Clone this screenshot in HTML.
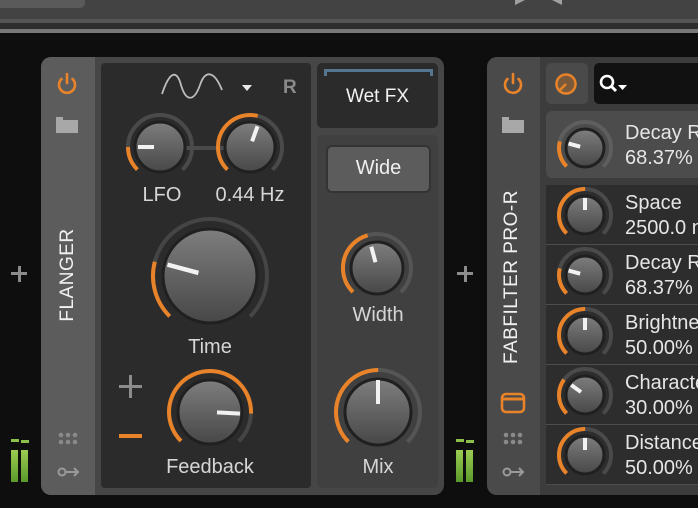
<!DOCTYPE html>
<html><head><meta charset="utf-8"><style>
*{margin:0;padding:0;box-sizing:border-box}
body{width:698px;height:508px;background:#0e0e0e;position:relative;overflow:hidden;font-family:"Liberation Sans","DejaVu Sans",sans-serif;color:#dedede}
.a{position:absolute}
.t{position:absolute;text-align:center;font-size:20px;color:#d6d6d6;white-space:nowrap}
.ff{position:absolute;left:625px;font-size:20px;line-height:25px;color:#e6e6e6;white-space:nowrap}
</style></head><body>
<div class="a" style="left:0;top:0;width:698px;height:19px;background:#434343"></div>
<div class="a" style="left:0;top:0;width:85px;height:8px;background:#5a5a5a;border-bottom-right-radius:5px"></div>
<div class="a" style="left:0;top:19px;width:698px;height:4px;background:#555"></div>
<div class="a" style="left:0;top:23px;width:698px;height:6px;background:#2e2e2e"></div>
<div class="a" style="left:0;top:29px;width:698px;height:4px;background:#777"></div>

<div class="a" style="left:11px;top:272px;width:16px;height:3px;background:#8c8c8c"></div>
<div class="a" style="left:18px;top:266px;width:3px;height:16px;background:#8c8c8c"></div>
<div class="a" style="left:457px;top:272px;width:16px;height:3px;background:#8c8c8c"></div>
<div class="a" style="left:464px;top:266px;width:3px;height:16px;background:#8c8c8c"></div>
<div class="a" style="left:11px;top:439px;width:8px;height:3px;background:#8cc04a"></div>
<div class="a" style="left:21px;top:440px;width:8px;height:3px;background:#8cc04a"></div>
<div class="a" style="left:11px;top:450px;width:7px;height:32px;background:linear-gradient(#9ccc52,#5a9a2a)"></div>
<div class="a" style="left:21px;top:450px;width:7px;height:32px;background:linear-gradient(#9ccc52,#5a9a2a)"></div>
<div class="a" style="left:456px;top:439px;width:8px;height:3px;background:#8cc04a"></div>
<div class="a" style="left:466px;top:440px;width:8px;height:3px;background:#8cc04a"></div>
<div class="a" style="left:456px;top:450px;width:7px;height:32px;background:linear-gradient(#9ccc52,#5a9a2a)"></div>
<div class="a" style="left:466px;top:450px;width:7px;height:32px;background:linear-gradient(#9ccc52,#5a9a2a)"></div>

<div class="a" style="left:41px;top:57px;width:403px;height:438px;background:#464646;border-radius:10px;overflow:hidden">
  <div class="a" style="left:0;top:0;width:54px;height:438px;background:#5c5c5c"></div>
</div>
<div class="a" style="left:101px;top:63px;width:210px;height:425px;background:#2b2b2b;border-radius:4px"></div>
<div class="a" style="left:317px;top:63px;width:121px;height:65px;background:#2b2b2b;border-radius:5px"></div>
<div class="a" style="left:317px;top:135px;width:121px;height:353px;background:#404040;border-radius:5px"></div>
<div class="a" style="left:324px;top:69px;width:109px;height:3px;background:#56758e"></div>
<div class="a" style="left:324px;top:69px;width:3px;height:7px;background:#56758e"></div>
<div class="a" style="left:430px;top:69px;width:3px;height:7px;background:#56758e"></div>
<div class="t" style="left:317px;width:121px;top:86px;font-size:19px;color:#f2f2f2">Wet FX</div>
<div class="a" style="left:326px;top:145px;width:105px;height:48px;background:#5c5c5c;border:2px solid #333;border-radius:6px"></div>
<div class="t" style="left:326px;width:105px;top:157px;color:#f0f0f0">Wide</div>
<div class="a" style="left:41px;top:215px;width:54px;height:120px"><div style="position:absolute;left:27px;top:60px;transform:translate(-50%,-50%) rotate(-90deg);font-size:19px;color:#f0f0f0;white-space:nowrap;letter-spacing:0.5px">FLANGER</div></div>

<div class="t" style="left:122px;width:80px;top:184px">LFO</div>
<div class="t" style="left:205px;width:90px;top:184px">0.44 Hz</div>
<div class="t" style="left:160px;width:100px;top:336px">Time</div>
<div class="t" style="left:150px;width:120px;top:456px">Feedback</div>
<div class="t" style="left:328px;width:100px;top:304px">Width</div>
<div class="t" style="left:328px;width:100px;top:456px">Mix</div>
<div class="a" style="left:283px;top:77px;font-size:19px;font-weight:bold;color:#8a8a8a">R</div>
<div class="a" style="left:119px;top:385px;width:23px;height:3px;background:#8c8c8c"></div>
<div class="a" style="left:129px;top:375px;width:3px;height:23px;background:#8c8c8c"></div>
<div class="a" style="left:119px;top:434px;width:23px;height:4px;background:#e8832a"></div>

<div class="a" style="left:487px;top:57px;width:230px;height:438px;background:#3c3c3c;border-radius:10px;overflow:hidden">
  <div class="a" style="left:0;top:0;width:53px;height:438px;background:#4a4a4a"></div>
</div>
<div class="a" style="left:546px;top:63px;width:42px;height:41px;background:#4a4a4a;border-radius:5px"></div>
<div class="a" style="left:594px;top:63px;width:110px;height:41px;background:#111;border-radius:5px"></div>
<div class="a" style="left:546px;top:111px;width:160px;height:67px;background:#4c4c4c;border-radius:6px"></div>
<div class="a" style="left:546px;top:185px;width:160px;height:300px;background:#2d2d2d"></div>
<div class="a" style="left:546px;top:244px;width:160px;height:1px;background:#4d4d4d"></div>
<div class="a" style="left:546px;top:304px;width:160px;height:1px;background:#4d4d4d"></div>
<div class="a" style="left:546px;top:364px;width:160px;height:1px;background:#4d4d4d"></div>
<div class="a" style="left:546px;top:424px;width:160px;height:1px;background:#4d4d4d"></div>
<div class="a" style="left:546px;top:484px;width:160px;height:1px;background:#4d4d4d"></div>
<div class="ff" style="top:121px">Decay Rate<br>68.37%</div>
<div class="ff" style="top:191px">Space<br>2500.0 ms</div>
<div class="ff" style="top:251px">Decay Rate<br>68.37%</div>
<div class="ff" style="top:311px">Brightness<br>50.00%</div>
<div class="ff" style="top:371px">Character<br>30.00%</div>
<div class="ff" style="top:431px">Distance<br>50.00%</div>
<div class="a" style="left:487px;top:190px;width:53px;height:175px"><div style="position:absolute;left:25px;top:87px;transform:translate(-50%,-50%) rotate(-90deg);font-size:19px;color:#f0f0f0;white-space:nowrap;letter-spacing:0.5px">FABFILTER PRO-R</div></div>

<svg class="a" style="left:0;top:0" width="698" height="508" viewBox="0 0 698 508">
<defs>
<linearGradient id="g" x1="0" y1="0" x2="0" y2="1"><stop offset="0" stop-color="#7e7e7e"/><stop offset="1" stop-color="#474747"/></linearGradient>
<g id="pw"><path d="M-5.5,-5 A8,8 0 1 0 5.5,-5" fill="none" stroke="#e8832a" stroke-width="2.6" stroke-linecap="round"/><line x1="0" y1="-10" x2="0" y2="-1" stroke="#e8832a" stroke-width="2.6" stroke-linecap="round"/></g>
<g id="fd"><path d="M-11,-9 h7 v3 h15 v13 h-22z" fill="#a8a8a8"/></g>
<g id="dt" fill="#8a8a8a"><circle cx="-7" cy="-3" r="2.3"/><circle cx="0" cy="-3" r="2.3"/><circle cx="7" cy="-3" r="2.3"/><circle cx="-7" cy="4" r="2.3"/><circle cx="0" cy="4" r="2.3"/><circle cx="7" cy="4" r="2.3"/></g>
<g id="ky" fill="none" stroke="#9a9a9a" stroke-width="2"><circle cx="-6" cy="0" r="3.5"/><path d="M-2.5,0 H10 M6,-4 L10,0 L6,4"/></g>
</defs>
<use href="#pw" x="67" y="84"/><use href="#fd" x="67" y="126"/><use href="#dt" x="68" y="438"/><use href="#ky" x="68" y="472"/>
<use href="#pw" x="513" y="84"/><use href="#fd" x="513" y="126"/><use href="#dt" x="513" y="438"/><use href="#ky" x="513" y="472"/>
<rect x="502" y="394" width="22" height="18" rx="4" fill="none" stroke="#e8832a" stroke-width="2.6"/>
<line x1="502" y1="399" x2="524" y2="399" stroke="#e8832a" stroke-width="3"/>
<circle cx="566" cy="84" r="9.5" fill="#7a5a3a" stroke="#e8832a" stroke-width="2.5"/>
<line x1="566" y1="84" x2="560" y2="90" stroke="#e8832a" stroke-width="2.5"/>
<circle cx="607" cy="82" r="6" fill="none" stroke="#fff" stroke-width="2.6"/>
<line x1="611" y1="86" x2="616" y2="91" stroke="#fff" stroke-width="3"/>
<path d="M618,85 h9 l-4.5,5z" fill="#fff"/>
<path d="M162,94 C170,70 177,70 181,85 C186,102 194,102 200,85 C205,70 214,70 222,90" fill="none" stroke="#bdbdbd" stroke-width="1.8"/>
<path d="M242,85 h10 l-5,6z" fill="#e8e8e8"/>
<line x1="186" y1="148" x2="226" y2="148" stroke="#4a4a4a" stroke-width="4"/>

<g stroke-width="4" fill="none">
<circle cx="160" cy="147" r="32" stroke="#4a4a4a" stroke-dasharray="150.8 300" transform="rotate(135 160 147)"/>
<circle cx="160" cy="147" r="32" stroke="#e8832a" stroke-dasharray="25.1 300" transform="rotate(135 160 147)"/>
<circle cx="250" cy="147" r="32" stroke="#4a4a4a" stroke-dasharray="150.8 300" transform="rotate(135 250 147)"/>
<circle cx="250" cy="147" r="32" stroke="#e8832a" stroke-dasharray="83 300" transform="rotate(135 250 147)"/>
<circle cx="210" cy="276" r="57" stroke="#454545" stroke-dasharray="268.6 400" transform="rotate(135 210 276)"/>
<circle cx="210" cy="276" r="57" stroke="#e8832a" stroke-dasharray="59.1 400" transform="rotate(135 210 276)"/>
<circle cx="210" cy="412" r="41" stroke="#454545" stroke-dasharray="193.2 300" transform="rotate(135 210 412)"/>
<circle cx="210" cy="412" r="41" stroke="#e8832a" stroke-dasharray="162.3 300" transform="rotate(135 210 412)"/>
<circle cx="377" cy="268" r="34" stroke="#555" stroke-dasharray="160.2 300" transform="rotate(135 377 268)"/>
<circle cx="377" cy="268" r="34" stroke="#e8832a" stroke-dasharray="70.5 300" transform="rotate(135 377 268)"/>
<circle cx="378" cy="412" r="42" stroke="#555" stroke-dasharray="197.9 300" transform="rotate(135 378 412)"/>
<circle cx="378" cy="412" r="42" stroke="#e8832a" stroke-dasharray="99 300" transform="rotate(135 378 412)"/>
<circle cx="585" cy="148" r="26" stroke="#5e5e5e" stroke-dasharray="122.5 200" transform="rotate(135 585 148)"/>
<circle cx="585" cy="148" r="26" stroke="#e8832a" stroke-dasharray="27 200" transform="rotate(135 585 148)"/>
<circle cx="585" cy="215" r="26" stroke="#4a4a4a" stroke-dasharray="122.5 200" transform="rotate(135 585 215)"/>
<circle cx="585" cy="215" r="26" stroke="#e8832a" stroke-dasharray="61.3 200" transform="rotate(135 585 215)"/>
<circle cx="585" cy="275" r="26" stroke="#4a4a4a" stroke-dasharray="122.5 200" transform="rotate(135 585 275)"/>
<circle cx="585" cy="275" r="26" stroke="#e8832a" stroke-dasharray="27 200" transform="rotate(135 585 275)"/>
<circle cx="585" cy="335" r="26" stroke="#4a4a4a" stroke-dasharray="122.5 200" transform="rotate(135 585 335)"/>
<circle cx="585" cy="335" r="26" stroke="#e8832a" stroke-dasharray="61.3 200" transform="rotate(135 585 335)"/>
<circle cx="585" cy="395" r="26" stroke="#4a4a4a" stroke-dasharray="122.5 200" transform="rotate(135 585 395)"/>
<circle cx="585" cy="395" r="26" stroke="#e8832a" stroke-dasharray="36.8 200" transform="rotate(135 585 395)"/>
<circle cx="585" cy="455" r="26" stroke="#4a4a4a" stroke-dasharray="122.5 200" transform="rotate(135 585 455)"/>
<circle cx="585" cy="455" r="26" stroke="#e8832a" stroke-dasharray="61.3 200" transform="rotate(135 585 455)"/>
</g>
<g fill="url(#g)" stroke="#202020" stroke-width="3">
<circle cx="160" cy="147" r="25"/><circle cx="250" cy="147" r="25"/>
<circle cx="210" cy="276" r="47"/><circle cx="210" cy="412" r="32"/>
<circle cx="377" cy="268" r="26"/><circle cx="378" cy="412" r="33"/>
<circle cx="585" cy="148" r="19"/><circle cx="585" cy="215" r="19"/><circle cx="585" cy="275" r="19"/>
<circle cx="585" cy="335" r="19"/><circle cx="585" cy="395" r="19"/><circle cx="585" cy="455" r="19"/>
</g>
<g stroke="#f2f2f2" stroke-width="4">
<line x1="166" y1="147" x2="182" y2="147" transform="rotate(180 160 147)"/>
<line x1="256" y1="147" x2="272" y2="147" transform="rotate(290 250 147)"/>
<line x1="222" y1="276" x2="254" y2="276" stroke-width="4.5" transform="rotate(195 210 276)"/>
<line x1="217" y1="412" x2="240" y2="412" transform="rotate(363 210 412)"/>
<line x1="383" y1="268" x2="399" y2="268" transform="rotate(255 377 268)"/>
<line x1="386" y1="412" x2="410" y2="412" transform="rotate(270 378 412)"/>
<line x1="590" y1="148" x2="602" y2="148" transform="rotate(195 585 148)"/>
<line x1="590" y1="215" x2="602" y2="215" transform="rotate(270 585 215)"/>
<line x1="590" y1="275" x2="602" y2="275" transform="rotate(195 585 275)"/>
<line x1="590" y1="335" x2="602" y2="335" transform="rotate(270 585 335)"/>
<line x1="590" y1="395" x2="602" y2="395" transform="rotate(216 585 395)"/>
<line x1="590" y1="455" x2="602" y2="455" transform="rotate(270 585 455)"/>
</g>
<path d="M515,0 L525,0 L515,5z M562,0 L552,0 L562,5z" fill="#a0a0a0"/>
</svg>
</body></html>
